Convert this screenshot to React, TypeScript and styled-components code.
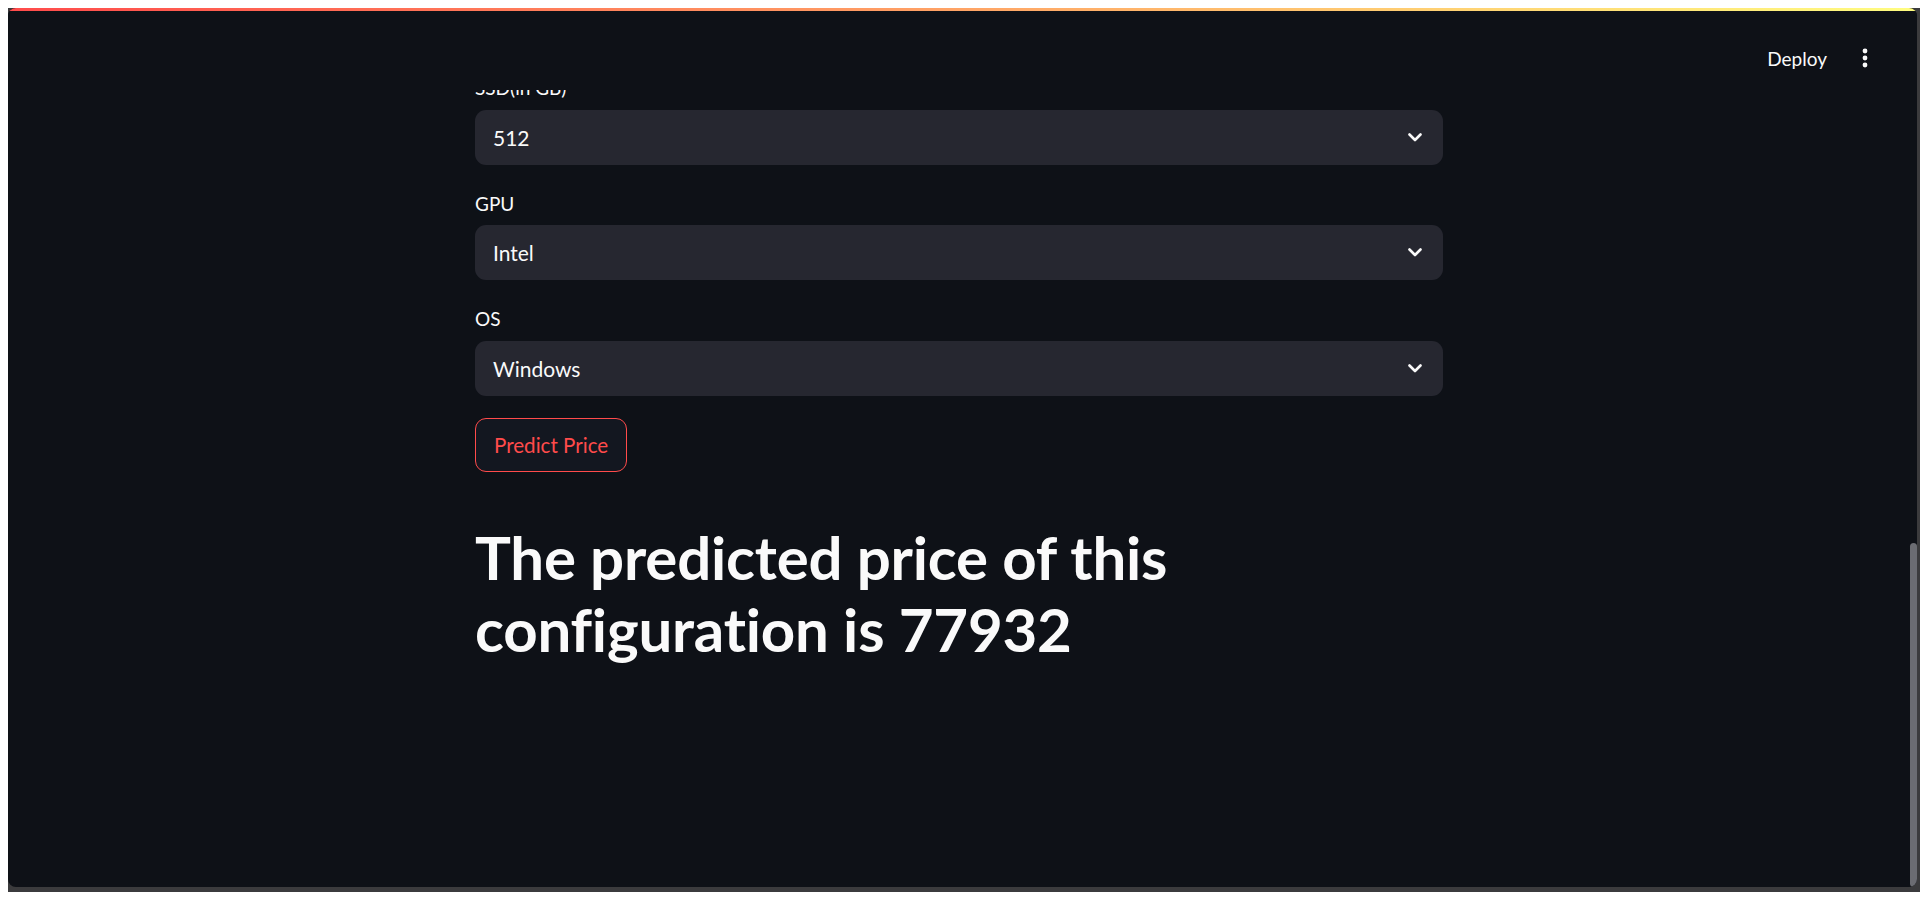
import React from "react";
import styled, { createGlobalStyle } from "styled-components";

const GlobalStyle = createGlobalStyle`
  html, body {
    margin: 0;
    padding: 0;
    background: #ffffff;
  }
  body {
    padding: 8px;
    font-family: Lato, "Noto Sans", sans-serif;
  }
`;

//window frame
const Frame = styled.div`
  width: 1912px;
  height: 884px;
  background: #3b3b3d;
  box-sizing: border-box;
  padding: 0 3px 5px 0;
`;

const AppView = styled.div`
  position: relative;
  height: 100%;
  background: #0e1117;
  border-radius: 8px;
  overflow: hidden;
  color: #fafafa;
`;

//header
const Header = styled.header`
  position: absolute;
  top: 0;
  left: 0;
  right: 0;
  height: 82px;
  background: #0e1117;
  z-index: 2;
`;

const Decoration = styled.div`
  height: 3px;
  background: linear-gradient(90deg, #ff4b4b, #fffd80);
`;

const Toolbar = styled.div`
  display: flex;
  justify-content: flex-end;
  align-items: center;
  gap: 18px;
  height: 64px;
  margin-top: 15px;
  padding-right: 32px;
`;

const DeployButton = styled.button`
  background: transparent;
  border: 0;
  padding: 0;
  color: #fafafa;
  font-family: inherit;
  font-size: 19px;
  cursor: pointer;
`;

const MenuButton = styled.button`
  width: 40px;
  height: 40px;
  display: flex;
  align-items: center;
  justify-content: center;
  background: transparent;
  border: 0;
  padding: 0;
  cursor: pointer;
`;

//content
const Main = styled.main`
  height: 100%;
  padding-top: 63px;
  box-sizing: border-box;
  display: flex;
  justify-content: center;
  padding-right: 7px;
`;

const Column = styled.div`
  width: 968px;
  display: flex;
  flex-direction: column;
  gap: 22px;
`;

const Field = styled.div`
  display: flex;
  flex-direction: column;
`;

const Label = styled.label`
  display: flex;
  align-items: center;
  min-height: 33px;
  margin-bottom: 5.5px;
  font-size: 19px;
  color: #fafafa;
`;

const SelectBox = styled.div`
  display: flex;
  align-items: center;
  justify-content: space-between;
  height: 55px;
  box-sizing: border-box;
  padding: 0 21px 0 18px;
  background: #262730;
  border-radius: 11px;
  font-size: 21px;
  color: #fafafa;
  cursor: pointer;
`;

const PredictButton = styled.button`
  align-self: flex-start;
  height: 54px;
  padding: 0 18px;
  background: #131720;
  border: 1px solid #ff4b4b;
  border-radius: 11px;
  color: #ff4b4b;
  font-family: inherit;
  font-size: 20.6px;
  cursor: pointer;
`;

const Result = styled.h1`
  margin: 0;
  padding: 27px 0 22px;
  font-size: 60px;
  line-height: 72px;
  font-weight: 700;
  color: #fafafa;
  letter-spacing: -0.2px;
`;

const ScrollThumb = styled.div`
  position: absolute;
  right: 0;
  top: 535px;
  bottom: 0;
  width: 7px;
  background: #6b6c72;
  border-radius: 4px;
`;

const Chevron = () => (
  <svg width="14" height="9" viewBox="0 0 14 9">
    <path d="M1.5 1.5 L7 7 L12.5 1.5" fill="none" stroke="#fafafa" strokeWidth="2.6" strokeLinecap="round" strokeLinejoin="round" />
  </svg>
);

const DotsIcon = () => (
  <svg width="6" height="20" viewBox="0 0 6 20">
    <circle cx="3" cy="3" r="2.4" fill="#fafafa" />
    <circle cx="3" cy="10" r="2.4" fill="#fafafa" />
    <circle cx="3" cy="17" r="2.4" fill="#fafafa" />
  </svg>
);

const fields = [
  { label: "SSD(in GB)", value: "512" },
  { label: "GPU", value: "Intel" },
  { label: "OS", value: "Windows" },
];

export default function App() {
  return (
    <>
      <GlobalStyle />
      <Frame>
        <AppView>
          <Header>
            <Decoration />
            <Toolbar>
              <DeployButton>Deploy</DeployButton>
              <MenuButton>
                <DotsIcon />
              </MenuButton>
            </Toolbar>
          </Header>
          <Main>
            <Column>
              {fields.map((f) => (
                <Field key={f.label}>
                  <Label>{f.label}</Label>
                  <SelectBox>
                    <span>{f.value}</span>
                    <Chevron />
                  </SelectBox>
                </Field>
              ))}
              <PredictButton>Predict Price</PredictButton>
              <Result>The predicted price of this configuration is 77932</Result>
            </Column>
          </Main>
          <ScrollThumb />
        </AppView>
      </Frame>
    </>
  );
}
